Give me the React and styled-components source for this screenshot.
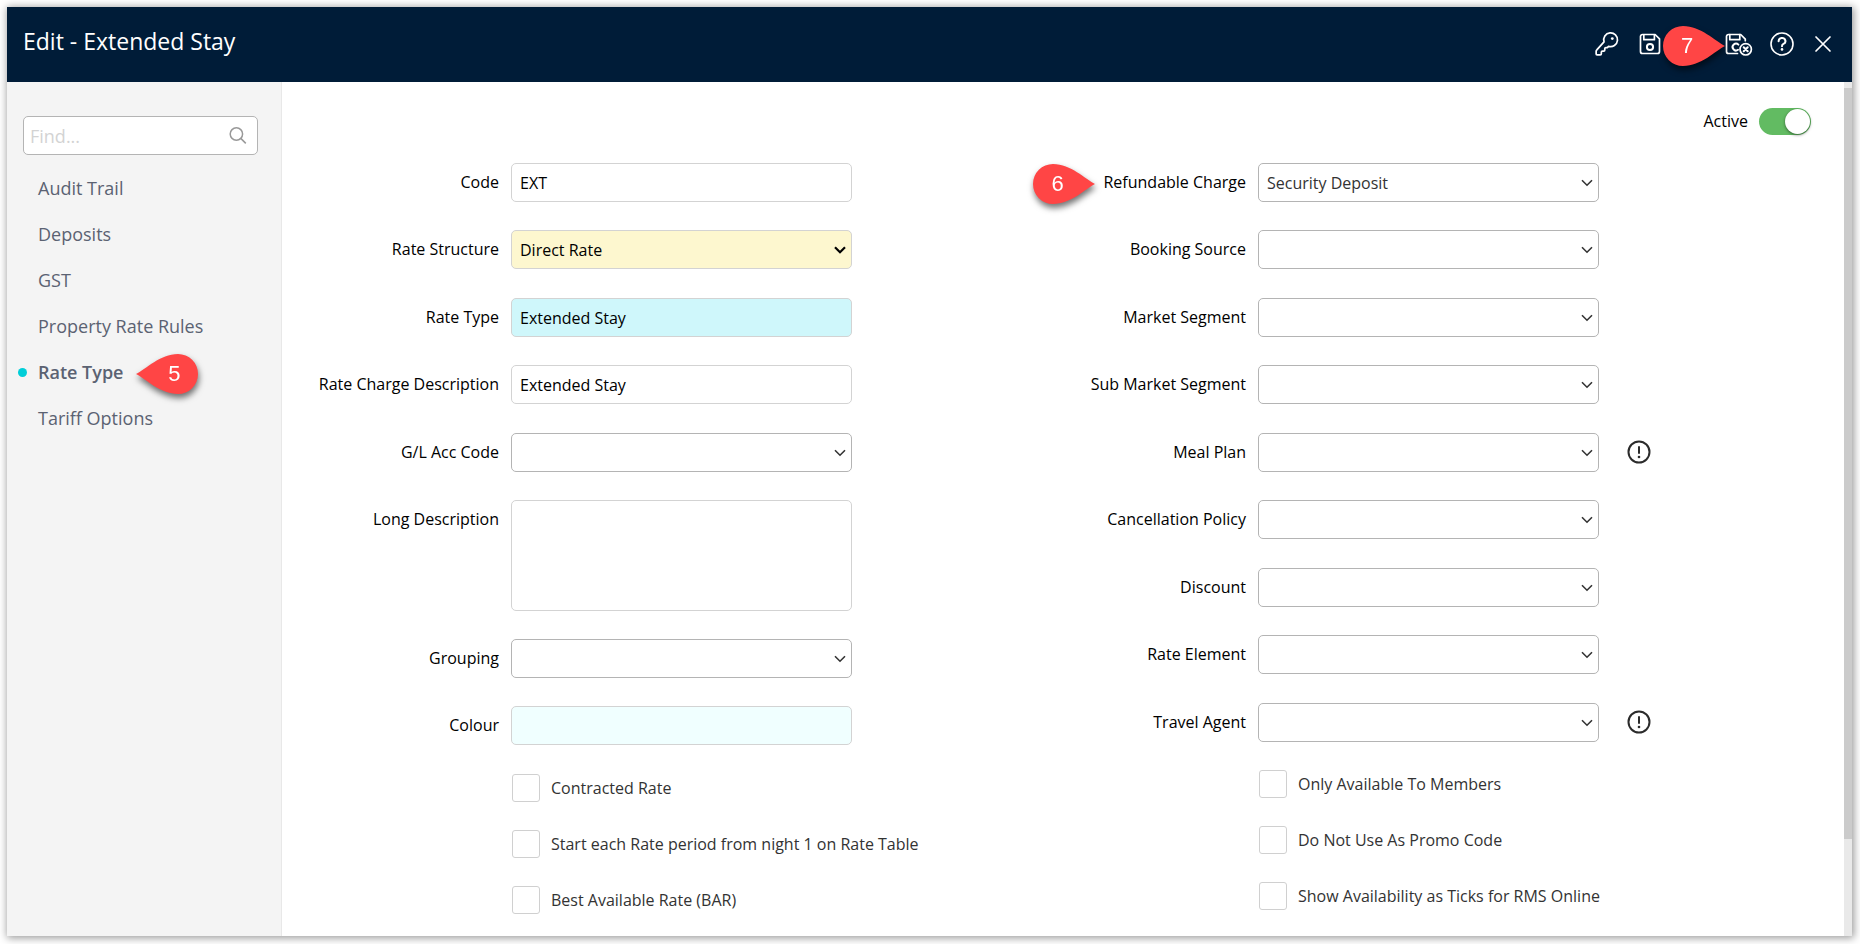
import React, { useState } from 'react'
import styled, { createGlobalStyle } from 'styled-components';

const navItems = ['Audit Trail', 'Deposits', 'GST', 'Property Rate Rules', 'Rate Type', 'Tariff Options'];

const leftFields = [
  { id: 'code', label: 'Code', type: 'text', value: 'EXT' },
  { id: 'rateStructure', label: 'Rate Structure', type: 'select', value: 'Direct Rate', tone: '#fdf7cf', bold: true },
  { id: 'rateType', label: 'Rate Type', type: 'text', value: 'Extended Stay', tone: '#cff7fb' },
  { id: 'rateCharge', label: 'Rate Charge Description', type: 'text', value: 'Extended Stay' },
  { id: 'glCode', label: 'G/L Acc Code', type: 'select', value: '' },
  { id: 'longDesc', label: 'Long Description', type: 'area', value: '' },
  { id: 'grouping', label: 'Grouping', type: 'select', value: '' },
  { id: 'colour', label: 'Colour', type: 'text', value: '', tone: '#f0ffff' },
];

const rightFields = [
  { id: 'refundable', label: 'Refundable Charge', type: 'select', value: 'Security Deposit', step: 6 },
  { id: 'bookingSource', label: 'Booking Source', type: 'select', value: '' },
  { id: 'market', label: 'Market Segment', type: 'select', value: '' },
  { id: 'subMarket', label: 'Sub Market Segment', type: 'select', value: '' },
  { id: 'mealPlan', label: 'Meal Plan', type: 'select', value: '', info: true },
  { id: 'cancellation', label: 'Cancellation Policy', type: 'select', value: '' },
  { id: 'discount', label: 'Discount', type: 'select', value: '' },
  { id: 'rateElement', label: 'Rate Element', type: 'select', value: '' },
  { id: 'travelAgent', label: 'Travel Agent', type: 'select', value: '', info: true },
];

const leftChecks = ['Contracted Rate', 'Start each Rate period from night 1 on Rate Table', 'Best Available Rate (BAR)'];
const rightChecks = ['Only Available To Members', 'Do Not Use As Promo Code', 'Show Availability as Ticks for RMS Online'];

const KeyIcon = () => (
  <svg width="28" height="26" viewBox="0 0 26 24" fill="none" stroke="currentColor" strokeWidth="1.6" strokeLinejoin="round">
    <path d="M2.6 17.4A2 2 0 0 0 2 18.8V21.2a.8.8 0 0 0 .8.8h3a1 1 0 0 0 1-1v-1.4a1 1 0 0 1 1-1h1.2a1 1 0 0 0 1-1v-1.2a1 1 0 0 1 1-1h.6a2 2 0 0 0 1.2-.4l.7-.8a6.4 6.4 0 1 0-4.2-4.2z" />
    <circle cx="17" cy="7" r="1.3" fill="currentColor" stroke="none" />
  </svg>
)

const SaveIcon = () => (
  <svg width="22" height="22" viewBox="0 0 22 22" fill="none" stroke="currentColor" strokeWidth="1.7" strokeLinejoin="round">
    <path d="M3.5 1.5h12.6l4.4 4.4v12.6a2 2 0 0 1-2 2h-15a2 2 0 0 1-2-2v-15a2 2 0 0 1 2-2z" />
    <path d="M4.8 1.5v5.2h10.6V1.5" />
    <circle cx="11" cy="14" r="3.1" strokeWidth="2" />
  </svg>
)

const SaveCloseIcon = () => (
  <svg width="28" height="24" viewBox="0 -1 28 24" fill="none" stroke="currentColor" strokeWidth="1.7" strokeLinejoin="round" strokeLinecap="round">
    <path d="M12.5 20.5h-9a2 2 0 0 1-2-2v-15a2 2 0 0 1 2-2h12.2l4.6 4.6v1.6" />
    <path d="M4.8 1.5v5.2h10V1.5" />
    <path d="M13.4 11.6a3.4 3.4 0 1 0-.4 5.2" strokeWidth="2" />
    <circle cx="20.7" cy="16.3" r="5.7" />
    <path d="M18.7 14.3l4 4M22.7 14.3l-4 4" strokeWidth="2" />
  </svg>
)

const HelpIcon = () => (
  <svg width="24" height="24" viewBox="0 0 24 24" fill="none" stroke="currentColor" strokeWidth="1.6" strokeLinecap="round">
    <circle cx="12" cy="12" r="11" />
    <path d="M8.6 9.2a3.4 3.1 0 1 1 4.9 2.7c-1 .5-1.5 1-1.5 2.3" strokeWidth="2" />
    <circle cx="12" cy="17.4" r="1.3" fill="currentColor" stroke="none" />
  </svg>
)

const CloseIcon = () => (
  <svg width="24" height="24" viewBox="0 0 24 24" fill="none" stroke="currentColor" strokeWidth="1.7" strokeLinecap="round">
    <path d="M5 5l14 14M19 5L5 19" />
  </svg>
)

const SearchIcon = () => (
  <svg width="18" height="18" viewBox="0 0 18 18" fill="none" stroke="currentColor" strokeWidth="1.5">
    <circle cx="7.4" cy="7" r="6.2" />
    <path d="M11.8 11.4l5 5" />
  </svg>
)

const InfoIcon = () => (
  <svg width="24" height="24" viewBox="0 0 24 24" fill="none" stroke="currentColor" strokeWidth="2">
    <circle cx="12" cy="12" r="10.5" />
    <path d="M12 6.2v7.6" />
    <circle cx="12" cy="17" r="1.3" fill="currentColor" stroke="none" />
  </svg>
)

const Callout = ({ step, side }) => (
  <Pin $side={side}>
    <svg width="62" height="40" viewBox="0 0 62 40">
      <path
        d="M62 20C52 15 38 0 20 0a20 20 0 0 0 0 40C38 40 52 25 62 20z"
        fill="#ff4545"
        transform={side === 'right' ? 'translate(62 0) scale(-1 1)' : undefined}
      />
    </svg>
    <PinNumber $side={side}>{step}</PinNumber>
  </Pin>
)

const Field = ({ field }) => {
  const [value, setValue] = useState(field.value);
  const change = (e) => setValue(e.target.value);

  return (
    <Row>
      <RowLabel htmlFor={field.id}>
        {field.step && <Callout step={field.step} side="left" />}
        {field.label}
      </RowLabel>
      {field.type === 'text' && <TextInput id={field.id} type="text" value={value} onChange={change} $tone={field.tone} />}
      {field.type === 'area' && <TextArea id={field.id} value={value} onChange={change} />}
      {field.type === 'select' && (
        <SelectBox>
          <Select id={field.id} value={value} onChange={change} $tone={field.tone}>
            <option value={field.value}>{field.value}</option>
          </Select>
          <svg width="12" height="8" viewBox="0 0 12 8" fill="none" stroke={field.bold ? '#000' : '#333'} strokeWidth={field.bold ? 2.2 : 1.6}>
            <path d="M1 1.2l5 5 5-5" />
          </svg>
        </SelectBox>
      )}
      {field.info && <InfoButton type="button" aria-label={field.label + ' info'}><InfoIcon /></InfoButton>}
    </Row>
  )
}

const App = () => {
  const [current, setCurrent] = useState('Rate Type');

  return (
    <Window>
      <GlobalStyle />
      <Header>
        <h1>Edit - Extended Stay</h1>
        <Tools>
          <ToolButton type="button" aria-label="Security"><KeyIcon /></ToolButton>
          <ToolButton type="button" aria-label="Save"><SaveIcon /></ToolButton>
          <ToolButton type="button" aria-label="Save and close" $spaced>
            <Callout step={7} side="left" />
            <SaveCloseIcon />
          </ToolButton>
          <ToolButton type="button" aria-label="Help"><HelpIcon /></ToolButton>
          <ToolButton type="button" aria-label="Close"><CloseIcon /></ToolButton>
        </Tools>
      </Header>
      <Body>
        <Sidebar>
          <Search>
            <input type="text" placeholder="Find..." aria-label="Find" />
            <SearchIcon />
          </Search>
          <nav>
            {navItems.map((item) => (
              <NavLink key={item} href="#" $active={item === current} onClick={() => setCurrent(item)}>
                <NavText>
                  {item}
                  {item === 'Rate Type' && <Callout step={5} side="right" />}
                </NavText>
              </NavLink>
            ))}
          </nav>
        </Sidebar>
        <Content>
          <ActiveRow>
            <label htmlFor="active">Active</label>
            <Toggle id="active" type="checkbox" defaultChecked />
          </ActiveRow>
          <Columns>
            {[[leftFields, leftChecks], [rightFields, rightChecks]].map(([fields, checks]) => (
              <div key={fields[0].id}>
                {fields.map((f) => <Field key={f.id} field={f} />)}
                <Checks>
                  {checks.map((c) => (
                    <label key={c}><input type="checkbox" />{c}</label>
                  ))}
                </Checks>
              </div>
            ))}
          </Columns>
        </Content>
        <ScrollTrack><ScrollThumb /></ScrollTrack>
      </Body>
    </Window>
  )
}

const GlobalStyle = createGlobalStyle`
* {
  box-sizing: border-box;
}
body {
  margin: 0;
  background: #fff;
  color: #000;
  font-family: "Open Sans", "Noto Sans", sans-serif;
  font-size: 16px;
  line-height: 24px;
}
input, select, textarea, button {
  font: inherit;
  color: inherit;
}
`

const Window = styled.div`
  display: flex;
  flex-direction: column;
  min-height: calc(100vh - 15px);
  margin: 7px 8px 8px 7px;
  background: #fff;
  box-shadow: 1px 1px 8px 1px rgb(0 0 0 / 40%);
`

const Header = styled.header`
  display: flex;
  justify-content: space-between;
  height: 75px;
  padding: 0 17px 1px 16px;
  background: #001c38;
  color: #fff;
  h1 {
    margin: 0;
    padding-top: 18px;
    font-size: 23px;
    line-height: 32px;
    font-weight: 400;
  }
`

const Tools = styled.div`
  display: flex;
  align-items: center;
  gap: 17px;
`

const ToolButton = styled.button`
  position: relative;
  display: flex;
  padding: 0;
  margin-left: ${({ $spaced }) => ($spaced ? '47px' : '0')};
  border: 0;
  background: none;
  cursor: pointer;
`

const Pin = styled.span`
  position: absolute;
  top: calc(50% + 2px);
  ${({ $side }) => ($side === 'right' ? 'left: 100%; margin-left: 13px;' : 'right: 100%;')}
  display: flex;
  transform: translateY(-50%);
  filter: drop-shadow(1px 4px 3px rgb(0 0 0 / 55%));
  z-index: 1;
  label & {
    margin-right: 8px;
  }
`

const PinNumber = styled.span`
  position: absolute;
  top: 8px;
  ${({ $side }) => ($side === 'right' ? 'right: 18px;' : 'left: 18px;')}
  color: #fff;
  font-family: "Liberation Sans", Arial, sans-serif;
  font-size: 22px;
  font-weight: 400;
  line-height: 24px;
`

const Body = styled.div`
  display: flex;
  flex: 1;
`

const Sidebar = styled.aside`
  flex: 0 0 275px;
  min-width: 0;
  padding: 34px 23px 0 16px;
  border-right: 1px solid #e8e8e8;
  background: #f4f4f4;
  nav {
    padding-top: 10px;
  }
`

const Search = styled.div`
  display: flex;
  align-items: center;
  height: 39px;
  padding: 0 10px 0 6px;
  border: 1px solid #b4b4b4;
  border-radius: 5px;
  background: #fff;
  color: #999;
  input {
    flex: 1;
    min-width: 0;
    padding: 0;
    border: 0;
    outline: 0;
    font-size: 18px;
    &::placeholder {
      color: #d3d3d3;
    }
  }
`

const NavLink = styled.a`
  position: relative;
  display: flex;
  align-items: center;
  height: 46px;
  padding-left: 15px;
  color: #5b6272;
  font-size: 18px;
  font-weight: ${({ $active }) => ($active ? 600 : 400)};
  text-decoration: none;
  &::before {
    content: "";
    display: ${({ $active }) => ($active ? 'block' : 'none')};
    position: absolute;
    left: -5px;
    width: 9px;
    height: 9px;
    border-radius: 50%;
    background: #00ced8;
  }
`

const NavText = styled.span`
  position: relative;
`

const Content = styled.main`
  flex: 1;
  min-width: 0;
  padding: 25px 0 18px;
`

const ActiveRow = styled.div`
  display: flex;
  align-items: center;
  justify-content: flex-end;
  gap: 11px;
  height: 28px;
  padding-right: 33px;
`

const Toggle = styled.input`
  appearance: none;
  width: 52px;
  height: 27px;
  margin: 0;
  border-radius: 14px;
  background: #ccc;
  cursor: pointer;
  &::before {
    content: "";
    display: block;
    width: 25px;
    height: 25px;
    margin: 1px;
    border-radius: 50%;
    background: #fff;
    box-shadow: 0 1px 3px rgb(0 0 0 / 50%);
  }
  &:checked {
    background: #62bb62;
  }
  &:checked::before {
    margin-left: 26px;
  }
`

const Columns = styled.div`
  display: grid;
  grid-template-columns: 1fr 1fr;
  padding: 28px 38px 0 30px;
`

const Row = styled.div`
  display: grid;
  grid-template-columns: 187px minmax(0, 341px) 40px;
  align-items: start;
  column-gap: 12px;
  padding-bottom: 28px;
  min-height: 67px;
  &:nth-child(even) {
    min-height: 68px;
  }
`

const RowLabel = styled.label`
  position: relative;
  justify-self: end;
  padding: 7px 0;
  white-space: nowrap;
`

const control = `
  width: 100%;
  height: 39px;
  padding: 0 8px;
  border-radius: 5px;
  outline: 0;
`

const TextInput = styled.input`
  ${control}
  border: 1px solid #d3d3d3;
  background: ${({ $tone }) => $tone || '#fff'};
`

const TextArea = styled.textarea`
  ${control}
  display: block;
  height: 111px;
  border: 1px solid #d3d3d3;
  resize: none;
`

const SelectBox = styled.div`
  position: relative;
  svg {
    position: absolute;
    top: 16px;
    right: 6px;
    pointer-events: none;
  }
`

const Select = styled.select`
  ${control}
  display: block;
  appearance: none;
  border: 1px solid ${({ $tone }) => ($tone ? '#d3d3d3' : '#b4b4b4')};
  background: ${({ $tone }) => $tone || '#fff'};
  color: ${({ $tone }) => ($tone ? '#000' : '#333')};
`

const InfoButton = styled.button`
  display: flex;
  justify-self: end;
  margin-top: 7px;
  padding: 0;
  border: 0;
  background: none;
  color: #2b2b2b;
  cursor: pointer;
`

const Checks = styled.div`
  display: flex;
  flex-direction: column;
  align-items: flex-start;
  gap: 28px;
  padding-left: 200px;
  color: #333;
  label {
    display: flex;
    align-items: center;
    gap: 11px;
    height: 28px;
  }
  input {
    appearance: none;
    width: 28px;
    height: 28px;
    margin: 0;
    border: 1px solid #d0d0d0;
    border-radius: 3px;
    background: #fff;
  }
`

const ScrollTrack = styled.div`
  display: flex;
  flex: 0 0 8px;
  flex-direction: column;
  padding-top: 6px;
  background: #e9e9e9;
  &::after {
    content: "";
    flex: 4;
  }
`

const ScrollThumb = styled.div`
  flex: 31;
  background: #cbcbcb;
`

export default App
